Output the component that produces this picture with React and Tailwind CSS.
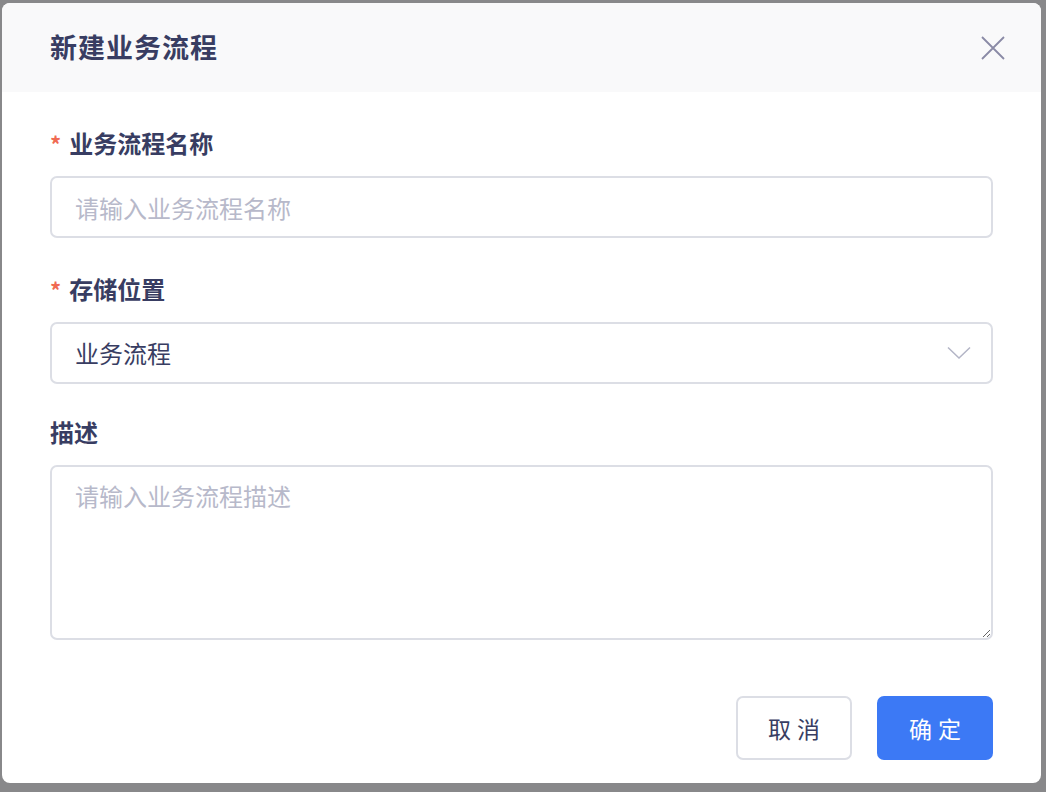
import React from 'react';

const FONT = { fontFamily: '"Noto Sans CJK SC", "Noto Sans", sans-serif' };

const Label = ({ required, children }) => (
  <div className="flex items-center h-[32px] mb-[17px] text-[24px] font-semibold text-[#383d62]">
    {required && <span className="text-[#f06a52] mr-[8px] text-[22px] leading-none">*</span>}
    {children}
  </div>
);

const App = () => {
  return (
    <div className="w-[1046px] h-[792px] bg-[#88888a] pt-[3px] pl-[2px]" style={FONT}>
      <div className="w-[1039px] h-[780px] bg-white rounded-[8px] overflow-hidden flex flex-col">
        {/* Header */}
        <div className="h-[89px] bg-[#f9f9fa] flex items-center justify-between pl-[48px] pr-[34px]">
          <h2 className="text-[27px] font-bold text-[#383d62] tracking-[1px]">新建业务流程</h2>
          <button className="w-[28px] h-[28px] flex items-center justify-center">
            <svg width="24" height="24" viewBox="0 0 24 24" fill="none" stroke="#8a8aa6" strokeWidth="1.8">
              <path d="M1 1L23 23M23 1L1 23" />
            </svg>
          </button>
        </div>

        {/* Form */}
        <div className="px-[48px] pt-[35px] flex-1 flex flex-col">
          <Label required>业务流程名称</Label>
          <input
            className="h-[62px] w-full border-2 border-[#dcdee5] rounded-[7px] px-[23px] text-[24px] text-[#383d62] placeholder:text-[#b7b9ca] outline-none"
            placeholder="请输入业务流程名称"
          />

          <div className="mt-[35px]">
            <Label required>存储位置</Label>
            <div className="h-[62px] w-full border-2 border-[#dcdee5] rounded-[7px] pl-[23px] pr-[20px] flex items-center justify-between">
              <span className="text-[24px] text-[#383d62]">业务流程</span>
              <svg width="24" height="14" viewBox="0 0 24 14" fill="none" stroke="#b3b5c6" strokeWidth="1.5">
                <path d="M1 1.5L12 12L23 1.5" />
              </svg>
            </div>
          </div>

          <div className="mt-[32px]">
            <Label>描述</Label>
            <textarea
              className="h-[175px] w-full border-2 border-[#dcdee5] rounded-[7px] px-[23px] py-[11px] text-[24px] text-[#383d62] placeholder:text-[#b7b9ca] outline-none block"
              placeholder="请输入业务流程描述"
            />
          </div>

          {/* Footer */}
          <div className="flex justify-end gap-[25px] mt-[56px]">
            <button className="w-[116px] h-[64px] border-2 border-[#dcdee5] rounded-[7px] bg-white text-[23px] text-[#383d62] tracking-[6px] pl-[6px]">
              取消
            </button>
            <button className="w-[116px] h-[64px] rounded-[7px] bg-[#3c79f5] text-[23px] text-white tracking-[6px] pl-[6px]">
              确定
            </button>
          </div>
        </div>
      </div>
    </div>
  );
};

export default App;
